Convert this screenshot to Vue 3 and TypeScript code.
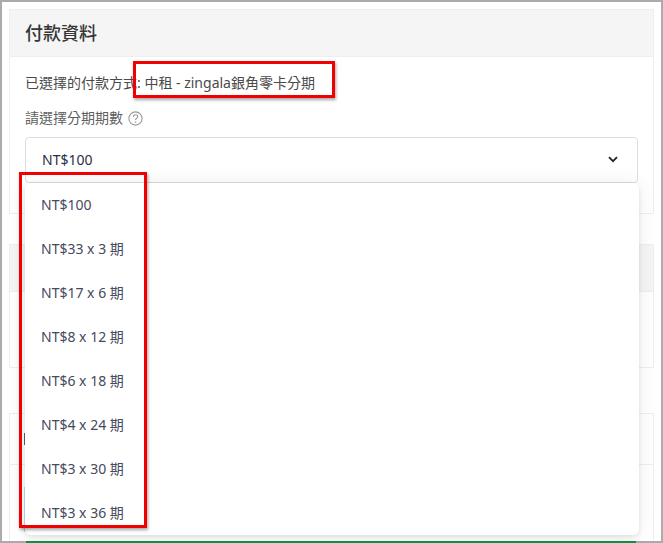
<script setup lang="ts">
const options: string[] = [
  'NT$100',
  'NT$33 x 3 期',
  'NT$17 x 6 期',
  'NT$8 x 12 期',
  'NT$6 x 18 期',
  'NT$4 x 24 期',
  'NT$3 x 30 期',
  'NT$3 x 36 期',
]
</script>

<template>
  <div class="frame">
    <section class="card first">
      <h2 class="card-head">付款資料</h2>
      <div class="card-body">
        <p class="chosen">已選擇的付款方式: 中租 - zingala銀角零卡分期</p>
        <div class="label">
          <span>請選擇分期期數</span>
          <svg class="help" width="15" height="15" viewBox="0 0 15 15" fill="none">
            <circle cx="7.5" cy="7.5" r="6.6" stroke="#999999" stroke-width="1.1" />
            <path d="M5.3 5.9c0-1.3.9-2.1 2.2-2.1s2.2.8 2.2 1.9c0 1.6-2.2 1.6-2.2 3.4" stroke="#999999" stroke-width="1.1" />
            <circle cx="7.5" cy="11" r=".8" fill="#999999" />
          </svg>
        </div>
        <div class="select">
          <span>NT$100</span>
          <svg class="chev" width="10" height="7" viewBox="0 0 10 7" fill="none">
            <path d="M1 1.2 5 5.2l4-4" stroke="#1f2430" stroke-width="1.8" />
          </svg>
        </div>
        <ul class="menu">
          <li v-for="o in options" :key="o">{{ o }}</li>
        </ul>
      </div>
    </section>
    <section class="card second">
      <div class="plain-head"></div>
    </section>
    <section class="card third">
      <div class="third-head"><span class="cut-text"></span></div>
      <div class="third-body">
        <div class="cut-input"></div>
        <div class="pay-btn"></div>
      </div>
    </section>
    <div class="edge"></div>
    <div class="mark mark-method"></div>
    <div class="mark mark-list"></div>
  </div>
</template>

<style scoped>
.frame {
  position: relative;
  box-sizing: border-box;
  width: 663px;
  height: 543px;
  overflow: hidden;
  background: #fff;
  border: 2px solid #ababab;
  border-bottom: 0;
  padding: 7px 7px 0;
  font-family: "Noto Sans", "Open Sans", "Noto Sans CJK TC", sans-serif;
  color: #4a4a4a;
}
.card {
  box-sizing: border-box;
  border: 1px solid #eeeeee;
  background: #fff;
}
.first {
  height: 205px;
}
.card-head {
  box-sizing: border-box;
  margin: 0;
  height: 47px;
  padding: 0 15px;
  background: #f5f5f5;
  border-bottom: 1px solid #eeeeee;
  font-size: 18px;
  font-weight: 500;
  line-height: 46px;
  color: #363636;
}
.card-body {
  position: relative;
  padding: 0 15px;
}
.chosen {
  margin: 0;
  padding-top: 15px;
  font-size: 14px;
  line-height: 22px;
}
.label {
  display: flex;
  align-items: center;
  gap: 5px;
  margin-top: 13px;
  font-size: 14px;
  line-height: 22px;
  color: #5f5f5f;
}
.select {
  display: flex;
  align-items: center;
  justify-content: space-between;
  box-sizing: border-box;
  height: 46px;
  margin-top: 8px;
  padding: 0 19px 1px 16px;
  border: 1px solid #dddddd;
  border-radius: 4px;
  font-size: 14px;
  color: #2b3044;
}
.menu {
  position: absolute;
  left: 15px;
  right: 14px;
  top: 126px;
  z-index: 2;
  margin: 0;
  padding: 0;
  list-style: none;
  background: #fff;
  border-radius: 6px;
  box-shadow: 0 2px 5px rgba(0, 0, 0, 0.1), 0 0 22px rgba(0, 0, 0, 0.07);
  font-size: 14px;
  color: #454a5c;
}
.menu li {
  height: 44px;
  padding-left: 16px;
  line-height: 44px;
}
.second {
  height: 124px;
  margin-top: 30px;
}
.plain-head {
  box-sizing: border-box;
  height: 47px;
  background: #f5f5f5;
  border-bottom: 1px solid #eeeeee;
}
.third {
  height: 140px;
  margin-top: 45px;
}
.third-head {
  box-sizing: border-box;
  height: 51px;
  padding: 19px 14px 0;
  border-bottom: 1px solid #eeeeee;
}
.cut-text {
  display: block;
  width: 3px;
  height: 12px;
  background: #5c5c5c;
}
.third-body {
  padding: 22px 14px 0;
}
.cut-input {
  box-sizing: border-box;
  width: 40px;
  height: 45px;
  border-left: 1px solid #b5e3ec;
}
.pay-btn {
  position: relative;
  z-index: 2;
  width: 610px;
  height: 12px;
  margin: 9px 0 0 2px;
  background: #0e9147;
}
.edge {
  position: absolute;
  left: 0;
  right: 0;
  bottom: 0;
  z-index: 1;
  height: 2px;
  background: #ababab;
}
.mark {
  position: absolute;
  z-index: 3;
  box-sizing: border-box;
  border: 3px solid #f00000;
  box-shadow: 1px 2px 3px rgba(0, 0, 0, 0.35);
  pointer-events: none;
}
.mark-method {
  left: 131px;
  top: 59px;
  width: 202px;
  height: 37px;
}
.mark-list {
  left: 17px;
  top: 170px;
  width: 128px;
  height: 356px;
}
</style>
